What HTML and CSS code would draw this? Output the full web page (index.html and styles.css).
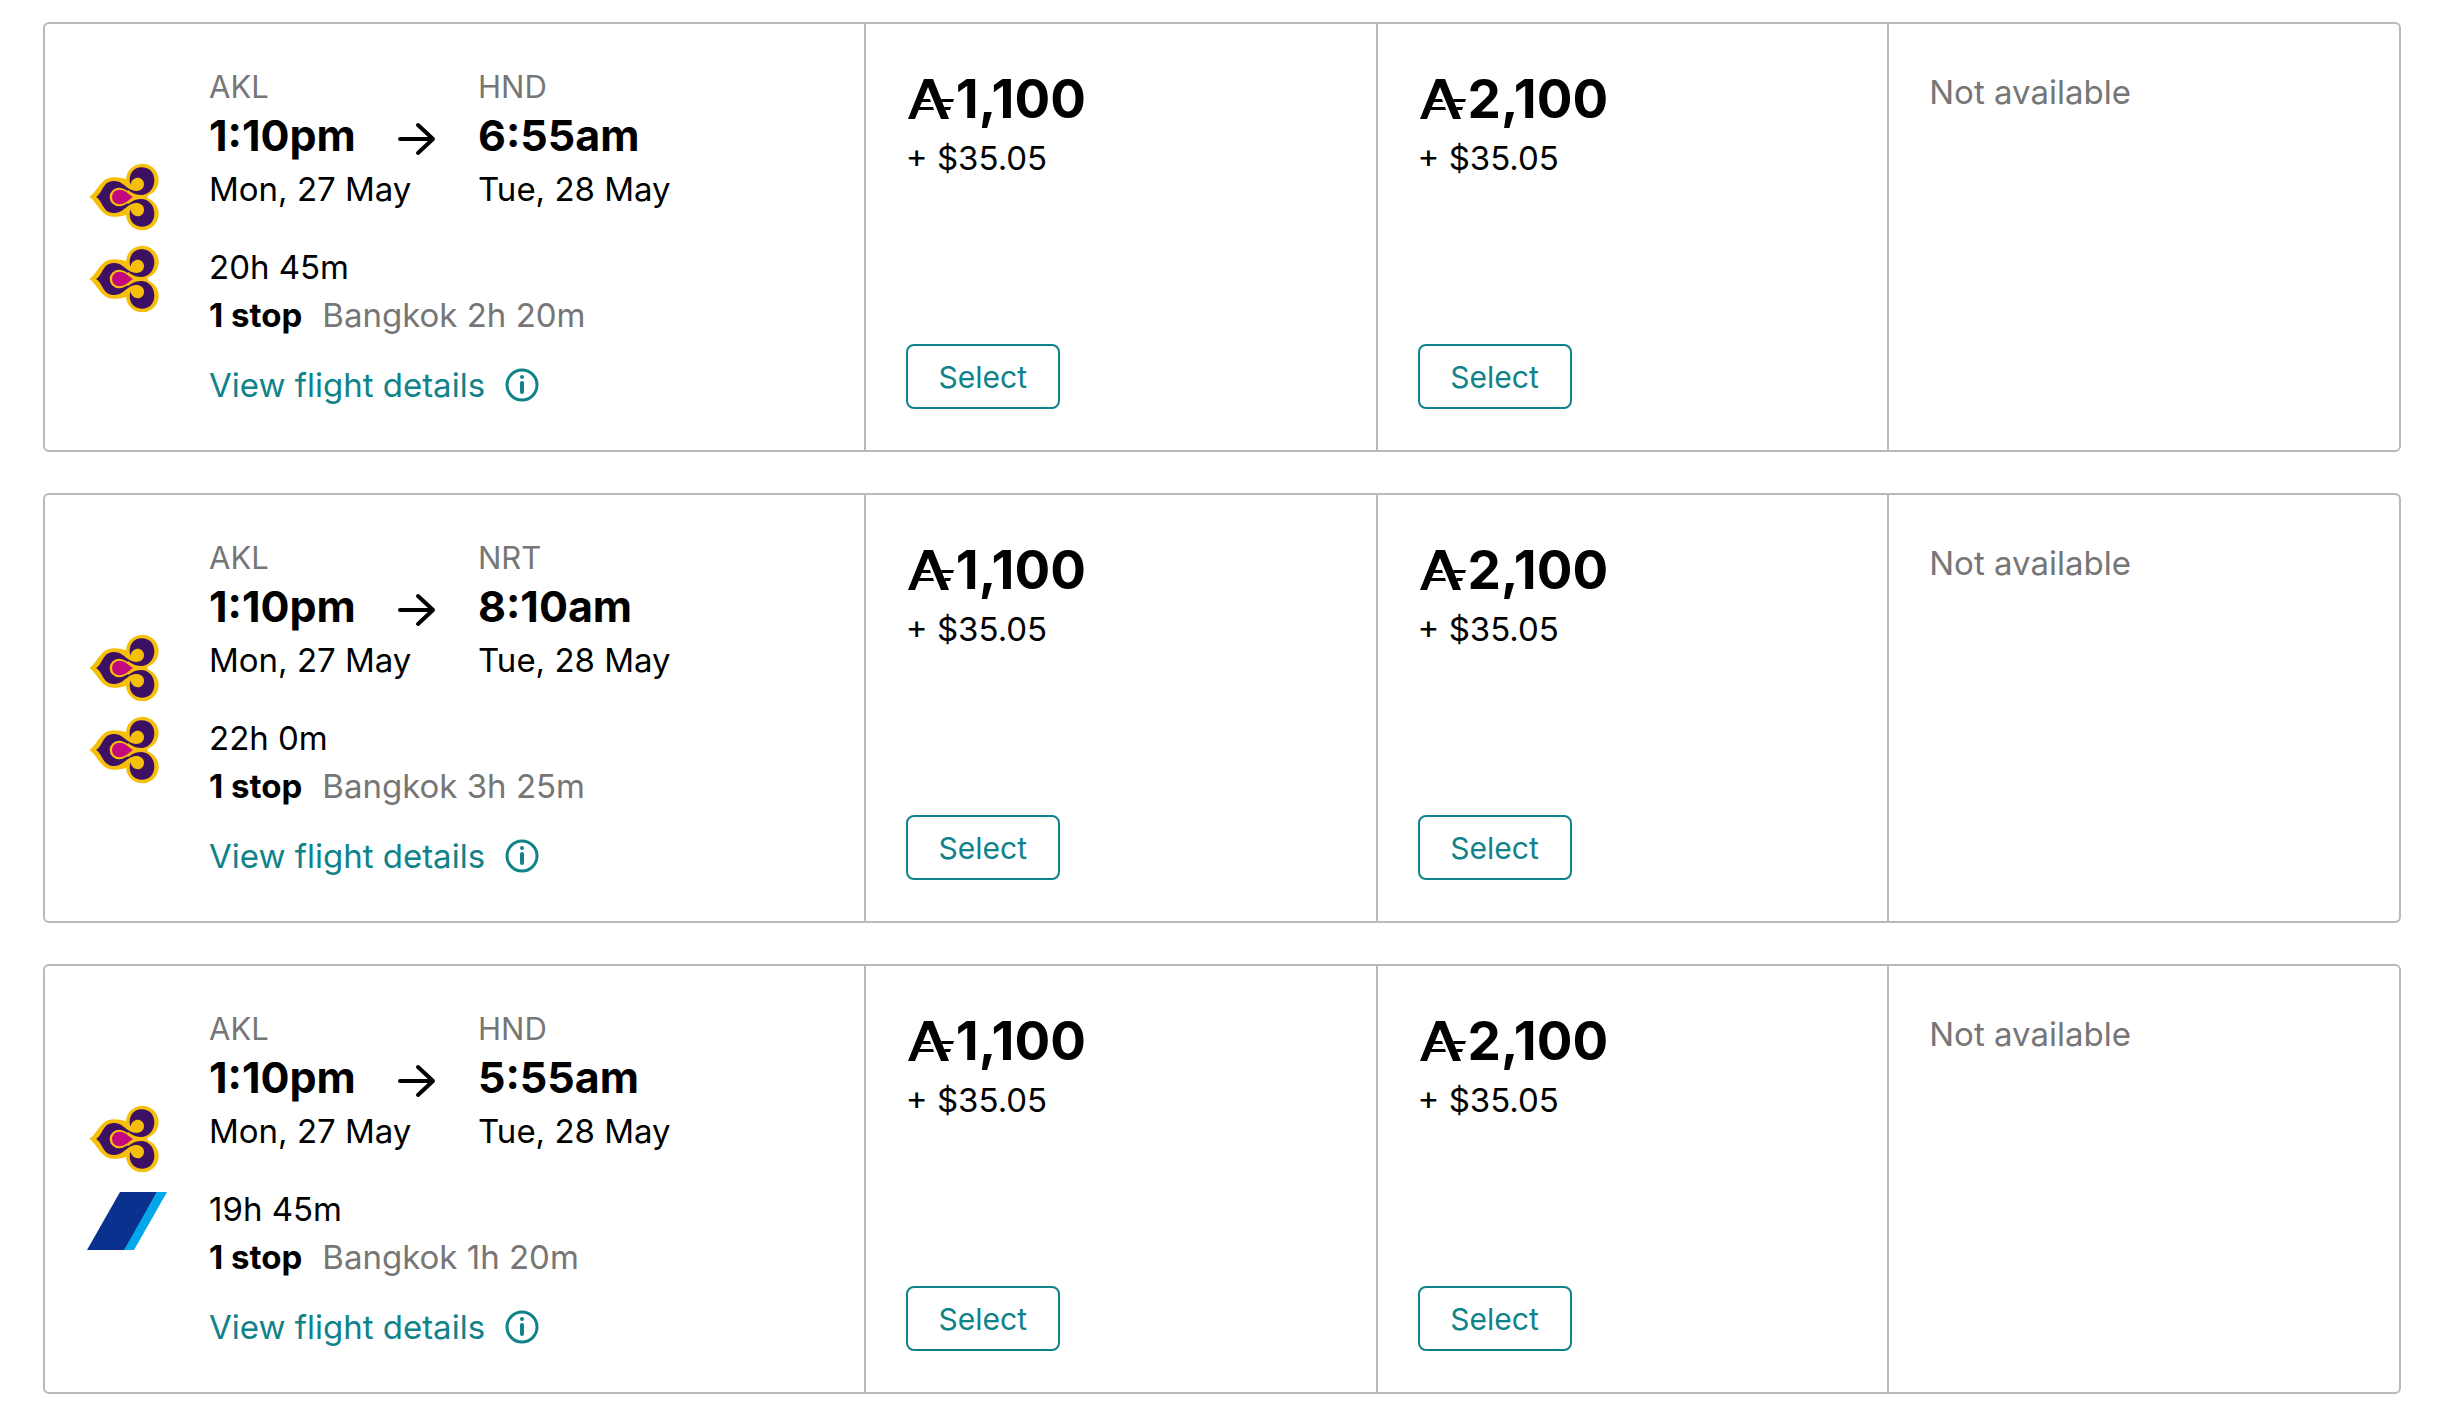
FILE: index.html
```html
<!DOCTYPE html>
<html lang="en">
<head>
    <meta charset="UTF-8">
    <meta name="viewport" content="width=device-width, initial-scale=1.0">
    <title>Select your flight</title>
    <link rel="stylesheet" href="styles.css">
</head>
<body>
    <!-- Shared icons -->
    <svg class="sprite" aria-hidden="true">
        <symbol id="thai" viewBox="51 14 240 246">
            <path fill="#f5bf0a" d="M58 137 C82 122 92 78 130 78 C146 78 158 80 168 84 A49 49 0 1 1 235 132 L232 137 L235 142 A49 49 0 1 1 168 190 C158 194 146 196 130 196 C92 196 82 152 58 137 Z"/>
            <g id="thai-half">
                <path fill="#3d1063" d="M78 137 C98 126 98 90 130 89 C153 88 163 104 180 114 C199 124 221 119 222 99 C222 75 188 70 181 100 C173 70 190 48 215 48 C238 48 253 64 253 87 C253 112 236 131 213 131 C194 131 184 122 174 116 L160 137 Z"/>
            </g>
            <use href="#thai-half" transform="matrix(1 0 0 -1 0 274)"/>
            <path fill="#f5bf0a" d="M205 137 C188 137 172 109 147 109 A28 28 0 0 0 147 165 C172 165 188 137 205 137 Z"/>
            <path fill="#c4087e" d="M189 137 C178 131 167 115 148 115 A22 22 0 0 0 148 159 C167 159 178 143 189 137 Z"/>
        </symbol>
        <symbol id="ana" viewBox="0 0 80 82">
            <path fill="#0b318f" d="M33 12 H70 L38 70 H0 Z"/>
            <path fill="#00a7ea" d="M70 12 H80 L47 70 H37 Z"/>
        </symbol>
        <symbol id="arrow" viewBox="0 0 40 36">
            <path fill="none" stroke="#000" stroke-width="4" stroke-linecap="round" stroke-linejoin="round" d="M3 18 H36 M21 4 L36 18 L21 32"/>
        </symbol>
        <symbol id="info" viewBox="0 0 34 34">
            <circle cx="17" cy="17" r="15" fill="none" stroke="#0f828a" stroke-width="3"/>
            <circle cx="17" cy="9" r="2" fill="#0f828a"/>
            <path fill="none" stroke="#0f828a" stroke-width="4" stroke-linecap="round" d="M17 15 V24"/>
        </symbol>
        <symbol id="airpoints" viewBox="0 0 46 40">
            <path d="M0 40 L16 0 H25 L41 40 H33 L20 8 L7 40 Z"/>
            <path d="M14 20 H22 L23 23 H13 Z M11 28 H25 L26 31 H10 Z M33 20 H46 L45 23 H34 Z M36 28 H43 L42 31 H37 Z"/>
        </symbol>
    </svg>

    <main class="flights">
        <article class="flight">
            <div class="flight-info">
                <div class="logos">
                    <svg class="logo" role="img" aria-label="Thai Airways"><use href="#thai"/></svg>
                    <svg class="logo" role="img" aria-label="Thai Airways"><use href="#thai"/></svg>
                </div>
                <div class="details">
                    <div class="route">
                        <div class="point">
                            <div class="airport">AKL</div>
                            <div class="time">1:10pm</div>
                            <div class="date">Mon, 27 May</div>
                        </div>
                        <svg class="arrow" aria-hidden="true"><use href="#arrow"/></svg>
                        <div class="point">
                            <div class="airport">HND</div>
                            <div class="time">6:55am</div>
                            <div class="date">Tue, 28 May</div>
                        </div>
                    </div>
                    <div class="duration">20h 45m</div>
                    <div class="stops"><strong>1 stop</strong><span class="stopover">Bangkok 2h 20m</span></div>
                    <a href="#" class="details-link">View flight details <svg class="info" aria-hidden="true"><use href="#info"/></svg></a>
                </div>
            </div>
            <div class="fare">
                <div class="price"><svg class="airpoints" role="img" aria-label="Airpoints Dollars"><use href="#airpoints"/></svg>1,100</div>
                <div class="taxes">+ $35.05</div>
                <button type="button" class="select">Select</button>
            </div>
            <div class="fare">
                <div class="price"><svg class="airpoints" role="img" aria-label="Airpoints Dollars"><use href="#airpoints"/></svg>2,100</div>
                <div class="taxes">+ $35.05</div>
                <button type="button" class="select">Select</button>
            </div>
            <div class="fare">
                <div class="unavailable">Not available</div>
            </div>
        </article>

        <article class="flight">
            <div class="flight-info">
                <div class="logos">
                    <svg class="logo" role="img" aria-label="Thai Airways"><use href="#thai"/></svg>
                    <svg class="logo" role="img" aria-label="Thai Airways"><use href="#thai"/></svg>
                </div>
                <div class="details">
                    <div class="route">
                        <div class="point">
                            <div class="airport">AKL</div>
                            <div class="time">1:10pm</div>
                            <div class="date">Mon, 27 May</div>
                        </div>
                        <svg class="arrow" aria-hidden="true"><use href="#arrow"/></svg>
                        <div class="point">
                            <div class="airport">NRT</div>
                            <div class="time">8:10am</div>
                            <div class="date">Tue, 28 May</div>
                        </div>
                    </div>
                    <div class="duration">22h 0m</div>
                    <div class="stops"><strong>1 stop</strong><span class="stopover">Bangkok 3h 25m</span></div>
                    <a href="#" class="details-link">View flight details <svg class="info" aria-hidden="true"><use href="#info"/></svg></a>
                </div>
            </div>
            <div class="fare">
                <div class="price"><svg class="airpoints" role="img" aria-label="Airpoints Dollars"><use href="#airpoints"/></svg>1,100</div>
                <div class="taxes">+ $35.05</div>
                <button type="button" class="select">Select</button>
            </div>
            <div class="fare">
                <div class="price"><svg class="airpoints" role="img" aria-label="Airpoints Dollars"><use href="#airpoints"/></svg>2,100</div>
                <div class="taxes">+ $35.05</div>
                <button type="button" class="select">Select</button>
            </div>
            <div class="fare">
                <div class="unavailable">Not available</div>
            </div>
        </article>

        <article class="flight">
            <div class="flight-info">
                <div class="logos">
                    <svg class="logo" role="img" aria-label="Thai Airways"><use href="#thai"/></svg>
                    <svg class="logo" role="img" aria-label="ANA"><use href="#ana"/></svg>
                </div>
                <div class="details">
                    <div class="route">
                        <div class="point">
                            <div class="airport">AKL</div>
                            <div class="time">1:10pm</div>
                            <div class="date">Mon, 27 May</div>
                        </div>
                        <svg class="arrow" aria-hidden="true"><use href="#arrow"/></svg>
                        <div class="point">
                            <div class="airport">HND</div>
                            <div class="time">5:55am</div>
                            <div class="date">Tue, 28 May</div>
                        </div>
                    </div>
                    <div class="duration">19h 45m</div>
                    <div class="stops"><strong>1 stop</strong><span class="stopover">Bangkok 1h 20m</span></div>
                    <a href="#" class="details-link">View flight details <svg class="info" aria-hidden="true"><use href="#info"/></svg></a>
                </div>
            </div>
            <div class="fare">
                <div class="price"><svg class="airpoints" role="img" aria-label="Airpoints Dollars"><use href="#airpoints"/></svg>1,100</div>
                <div class="taxes">+ $35.05</div>
                <button type="button" class="select">Select</button>
            </div>
            <div class="fare">
                <div class="price"><svg class="airpoints" role="img" aria-label="Airpoints Dollars"><use href="#airpoints"/></svg>2,100</div>
                <div class="taxes">+ $35.05</div>
                <button type="button" class="select">Select</button>
            </div>
            <div class="fare">
                <div class="unavailable">Not available</div>
            </div>
        </article>
    </main>
</body>
</html>
```
FILE: styles.css
```css
* {
    box-sizing: border-box;
}

body {
    margin: 0;
    background-color: #fff;
    color: #000;
    font-family: Inter, "Liberation Sans", sans-serif;
    font-size: 33px;
    line-height: 48px;
}

.sprite {
    position: absolute;
    width: 0;
    height: 0;
}

.flights {
    display: flex;
    flex-direction: column;
    gap: 41px;
    padding: 22px 38px 19px 43px;
}

.flight {
    display: grid;
    grid-template-columns: 8fr 5fr 5fr 5fr;
    border: 2px solid #b9b9b9;
    border-radius: 6px;
}

.flight-info {
    display: flex;
    align-items: center;
    gap: 42px;
    padding: 43px 42px 41px;
}

.logos {
    display: flex;
    flex-direction: column;
}

.logo {
    width: 80px;
    height: 82px;
}

.route {
    display: grid;
    grid-template-columns: 188px 81px auto;
    margin-bottom: 28px;
    white-space: nowrap;
}

.airport {
    color: #767676;
    font-size: 31px;
    line-height: 40px;
}

.time {
    font-size: 43px;
    font-weight: 700;
    line-height: 56px;
}

.date,
.taxes,
.unavailable {
    line-height: 52px;
}

.arrow {
    width: 40px;
    height: 36px;
    margin-top: 54px;
}

.stopover {
    margin-left: 20px;
    color: #767676;
}

.details-link {
    display: flex;
    align-items: center;
    gap: 20px;
    margin-top: 22px;
    color: #0f828a;
    text-decoration: none;
}

.info {
    width: 34px;
    height: 34px;
}

.fare {
    display: flex;
    flex-direction: column;
    align-items: flex-start;
    padding: 42px 40px 41px;
    border-left: 2px solid #b9b9b9;
}

.price {
    display: flex;
    align-items: center;
    gap: 2px;
    padding-left: 2px;
    font-size: 53px;
    font-weight: 700;
    line-height: 66px;
}

.airpoints {
    width: 46px;
    height: 40px;
}

.unavailable {
    color: #767676;
}

.select {
    width: 154px;
    height: 65px;
    margin-top: auto;
    border: 2px solid #0f828a;
    border-radius: 8px;
    background-color: #fff;
    color: #0f828a;
    font-family: inherit;
    font-size: 30px;
    cursor: pointer;
}
```
